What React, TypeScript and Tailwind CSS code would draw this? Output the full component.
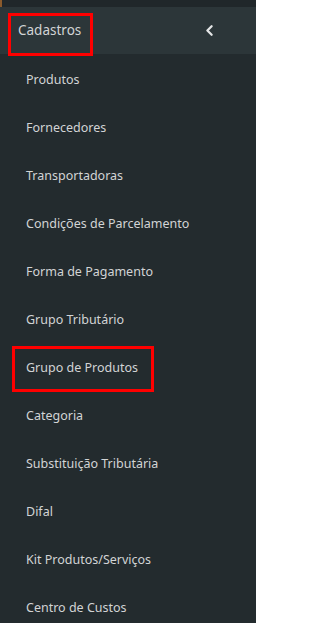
import { ChevronLeft } from 'lucide-react'

const items = [
  'Produtos',
  'Fornecedores',
  'Transportadoras',
  'Condições de Parcelamento',
  'Forma de Pagamento',
  'Grupo Tributário',
  'Grupo de Produtos',
  'Categoria',
  'Substituição Tributária',
  'Difal',
  'Kit Produtos/Serviços',
  'Centro de Custos',
]

export default function App() {
  return (
    <div
      className="w-[256px] h-[623px] overflow-hidden bg-[#232b2e] text-[#d2d4d5]"
      style={{ fontFamily: '"Noto Sans", "Open Sans", sans-serif' }}
    >
      {/* top strip */}
      <div className="h-[7px] bg-[#20272a] flex">
        <div className="w-[2px] bg-[#8a5a2c]" />
      </div>

      {/* section header */}
      <div className="relative h-[47px] bg-[#2c3639] flex items-center justify-between pl-[18px] pr-[38px]">
        <span className="text-[13.5px]">Cadastros</span>
        <ChevronLeft size={17} strokeWidth={3.2} className="text-[#e4e6e7]" />
        <div className="absolute left-[8px] top-[6px] w-[85px] h-[43px] border-[3px] border-[#ff0000]" />
      </div>

      {/* submenu */}
      <ul className="pt-[2px]">
        {items.map((item) => (
          <li key={item} className="relative h-[48px] flex items-center pl-[26px] text-[12.5px]">
            {item}
            {item === 'Grupo de Produtos' && (
              <div className="absolute left-[12px] top-[2px] w-[142px] h-[46px] border-[3px] border-[#ff0000]" />
            )}
          </li>
        ))}
      </ul>
    </div>
  )
}
